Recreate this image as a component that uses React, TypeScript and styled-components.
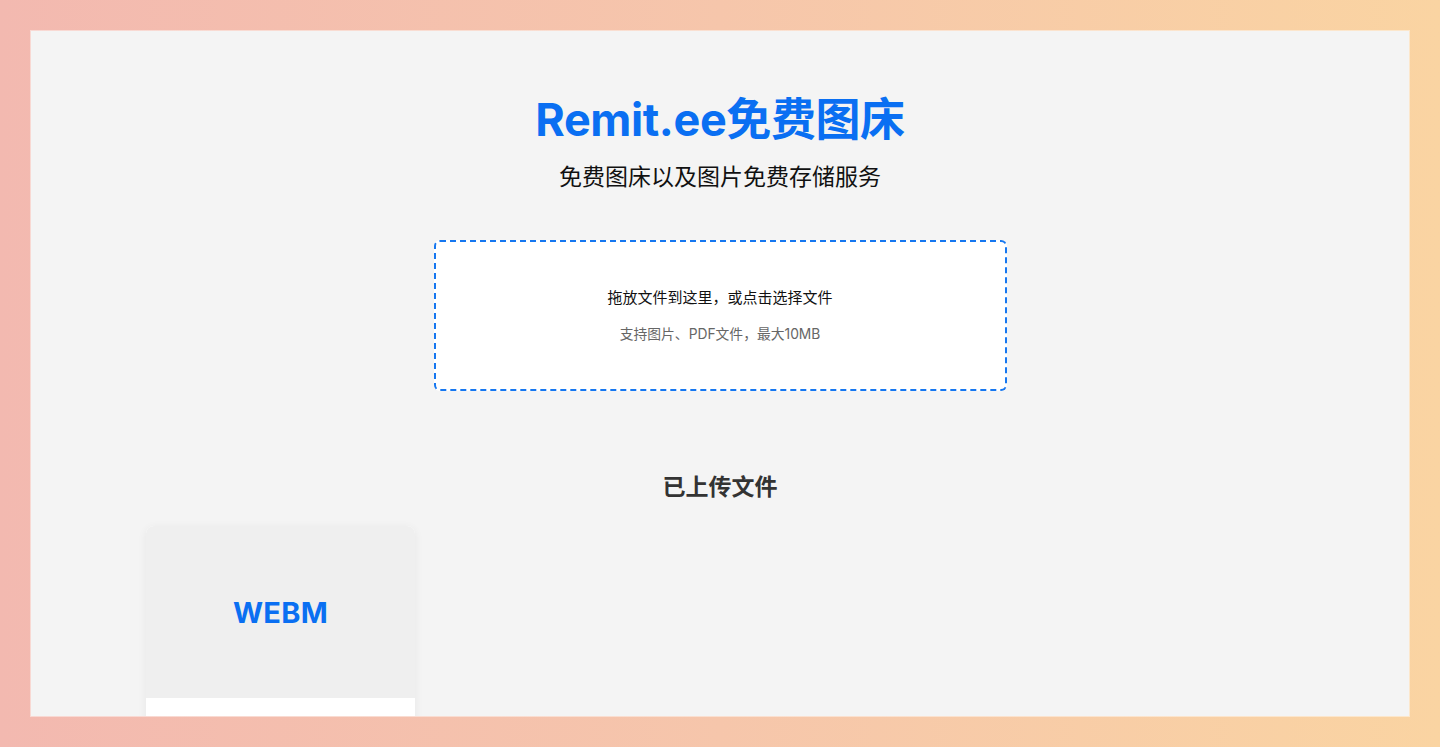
import styled, { createGlobalStyle } from "styled-components";

const GlobalStyle = createGlobalStyle`
  html, body {
    margin: 0;
    padding: 0;
  }
  body {
    font-family: Inter, "Noto Sans CJK SC", "Noto Sans", sans-serif;
    background: linear-gradient(90deg, #f3b9b0 0%, #f6c6ab 50%, #fad4a2 100%);
  }
`;

const Frame = styled.div`
  padding: 31px;
  height: 747px;
  box-sizing: border-box;
`;

const Panel = styled.main`
  height: 685px;
  background: #f4f4f4;
  overflow: hidden;
  box-shadow: 0 0 0 1px rgba(255, 255, 255, 0.45);
  display: flex;
  flex-direction: column;
  align-items: center;
  padding-top: 61px;
  box-sizing: border-box;
`;

const Title = styled.h1`
  margin: 0;
  font-size: 45px;
  line-height: 55px;
  font-weight: 700;
  color: #0a6ff2;
  letter-spacing: -0.4px;
`;

const Subtitle = styled.p`
  margin: 14px 0 0;
  font-size: 23px;
  line-height: 33px;
  color: #111;
`;

const DropZone = styled.div`
  margin-top: 46px;
  width: 573px;
  box-sizing: border-box;
  padding: 45px 20px;
  background: #fff;
  border: 2px dashed #1677f0;
  border-radius: 6px;
  text-align: center;
  cursor: pointer;
`;

const DropHint = styled.p`
  margin: 0;
  font-size: 15px;
  line-height: 21px;
  color: #111;
`;

const DropNote = styled.p`
  margin: 16px 0 0;
  font-size: 13.8px;
  line-height: 20px;
  color: #666;
`;

const SectionTitle = styled.h2`
  margin: 82px 0 0;
  font-size: 23px;
  line-height: 29px;
  font-weight: 700;
  color: #333;
`;

const FileGrid = styled.div`
  margin-top: 24px;
  width: 1148px;
  display: grid;
  grid-template-columns: repeat(4, 269px);
  gap: 24px;
`;

const Card = styled.div`
  background: #fff;
  border-radius: 8px;
  overflow: hidden;
  box-shadow: 0 2px 10px rgba(0, 0, 0, 0.06);
`;

const Preview = styled.div`
  height: 172px;
  background: #efefef;
  display: flex;
  align-items: center;
  justify-content: center;
`;

const FileType = styled.span`
  font-size: 29px;
  font-weight: 700;
  color: #0a6ff2;
  letter-spacing: 0.3px;
`;

const CardBody = styled.div`
  height: 90px;
  background: #fff;
`;

const files = [{ id: 1, type: "WEBM" }];

export default function App() {
  return (
    <>
      <GlobalStyle />
      <Frame>
        <Panel>
          <Title>Remit.ee免费图床</Title>
          <Subtitle>免费图床以及图片免费存储服务</Subtitle>
          <DropZone>
            <DropHint>拖放文件到这里，或点击选择文件</DropHint>
            <DropNote>支持图片、PDF文件，最大10MB</DropNote>
          </DropZone>
          <SectionTitle>已上传文件</SectionTitle>
          <FileGrid>
            {files.map((f) => (
              <Card key={f.id}>
                <Preview>
                  <FileType>{f.type}</FileType>
                </Preview>
                <CardBody />
              </Card>
            ))}
          </FileGrid>
        </Panel>
      </Frame>
    </>
  );
}
